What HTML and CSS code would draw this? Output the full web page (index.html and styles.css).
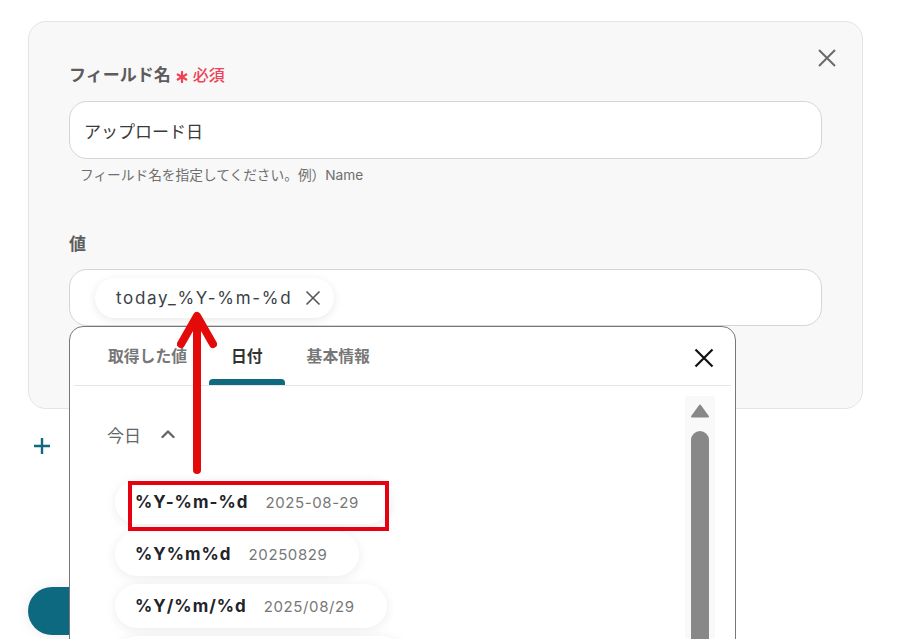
FILE: index.html
```html
<!DOCTYPE html>
<html lang="ja">
<head>
<meta charset="utf-8">
<title>フィールド設定</title>
<link rel="stylesheet" href="styles.css">
</head>
<body>
<div class="page">
  <section class="card">
    <div class="card-head">
      <div class="label">フィールド名<span class="req"><svg class="ast" viewBox="0 0 12 12" width="12" height="12"><g stroke="#ee4256" stroke-width="2.2" stroke-linecap="round"><line x1="6" y1="1" x2="6" y2="11"/><line x1="1.7" y1="3.5" x2="10.3" y2="8.5"/><line x1="1.7" y1="8.5" x2="10.3" y2="3.5"/></g></svg>必須</span></div>
      <button class="card-close" aria-label="閉じる"><svg viewBox="0 0 20 20" width="20" height="20"><path d="M2 2L18 18M18 2L2 18" stroke="#6b6b6b" stroke-width="2" fill="none"/></svg></button>
    </div>
    <div class="field">アップロード日</div>
    <p class="help">フィールド名を指定してください。例）Name</p>
    <div class="label label-value">値</div>
    <div class="value-wrap">
      <div class="field chip-field">
        <span class="chip"><span class="chip-text">today_%Y-%m-%d</span><svg class="chip-x" viewBox="0 0 16 16" width="16" height="16"><path d="M1.5 1.5L14.5 14.5M14.5 1.5L1.5 14.5" stroke="#555" stroke-width="1.6" fill="none"/></svg></span>
      </div>
      <div class="dropdown">
        <div class="tabbar">
          <div class="tabs">
            <span class="tab">取得した値</span>
            <span class="tab active">日付</span>
            <span class="tab">基本情報</span>
          </div>
          <button class="dd-close" aria-label="閉じる"><svg viewBox="0 0 20 20" width="20" height="20"><path d="M1.5 1.5L18.5 18.5M18.5 1.5L1.5 18.5" stroke="#111" stroke-width="2.2" fill="none"/></svg></button>
        </div>
        <div class="dd-body">
          <div class="list">
            <div class="group-head">今日<svg class="chev" viewBox="0 0 14 10" width="14" height="10"><path d="M1.5 8L7 2.5L12.5 8" stroke="#666" stroke-width="2.4" fill="none" stroke-linecap="round" stroke-linejoin="round"/></svg></div>
            <div class="items">
              <div class="item"><b>%Y-%m-%d</b><span>2025-08-29</span></div>
              <div class="item"><b>%Y%m%d</b><span>20250829</span></div>
              <div class="item"><b>%Y/%m/%d</b><span>2025/08/29</span></div>
              <div class="item item-more"></div>
            </div>
          </div>
          <div class="scrollbar">
            <svg class="sb-up" viewBox="0 0 18 14" width="18" height="14"><path d="M9 1.5L17 12.5H1Z" fill="#888" stroke="#888" stroke-width="2" stroke-linejoin="round"/></svg>
            <div class="sb-thumb"></div>
          </div>
        </div>
      </div>
    </div>
  </section>
  <div class="add"><svg viewBox="0 0 18 18" width="18" height="18"><path d="M9 1V17M1 9H17" stroke="#0f6a80" stroke-width="2.4" fill="none"/></svg></div>
  <div class="primary-btn"></div>
</div>
<div class="annot-box"></div>
<svg class="annot-arrow" viewBox="0 0 40 170" width="40" height="170"><g stroke="#e50a0a" stroke-width="8" stroke-linecap="round" stroke-linejoin="round" fill="none"><path d="M20 8V160"/><path d="M4 34L20 6L36 34"/></g></svg>
</body>
</html>
```

FILE: styles.css
```css
* { box-sizing: border-box; }
html, body { margin: 0; padding: 0; background: #fff; }
body {
  width: 897px;
  height: 639px;
  overflow: hidden;
  position: relative;
  font-family: "Inter", "Noto Sans CJK JP", sans-serif;
  color: #333;
}
button { background: none; border: 0; padding: 0; cursor: pointer; display: block; }

.page { padding: 21px 0 0 28px; }

.card {
  width: 835px;
  background: #f8f8f8;
  border: 1px solid #e4e4e4;
  border-radius: 18px;
  padding: 26px 40px 82px 40px;
  position: relative;
  z-index: 1;
}
.card-head { display: flex; justify-content: space-between; align-items: flex-start; }
.card-close { width: 20px; height: 20px; margin-right: -15px; }
.card-close svg { display: block; }

.label {
  font-size: 17px;
  font-weight: 700;
  line-height: 24px;
  color: #5c5c5c;
  padding-top: 15px;
  display: flex;
  align-items: center;
}
.req { display: inline-flex; align-items: center; color: #ee4256; font-size: 16px; font-weight: 500; margin-left: 5px; }
.ast { margin-right: 5px; margin-top: 3px; }

.field {
  height: 58px;
  margin-top: 14px;
  background: #fff;
  border: 1px solid #d3d5db;
  border-radius: 18px;
  padding: 0 14px;
  display: flex;
  align-items: center;
  font-size: 17px;
  color: #3a3a3a;
}
.help {
  margin: 7px 0 0 11px;
  font-size: 13.7px;
  line-height: 18px;
  color: #6e6e6e;
}
.label-value { padding-top: 0; margin-top: 48px; }

.value-wrap { position: relative; margin-top: 13px; }
.chip-field { height: 57px; margin-top: 0; padding-left: 25px; }
.chip {
  display: inline-flex;
  align-items: center;
  height: 40px;
  padding: 0 13px 0 21px;
  background: #fff;
  border-radius: 20px;
  box-shadow: 0 2px 10px rgba(0,0,0,0.09);
}
.chip-text { font-size: 17px; letter-spacing: 0.1em; color: #3b3f46; }
.chip-x { margin-left: 13px; display: block; }

.dropdown {
  position: absolute;
  top: 100%;
  left: 0;
  width: 667px;
  height: 340px;
  background: #fff;
  border: 1px solid #777;
  border-radius: 14px 14px 0 0;
  z-index: 3;
}
.tabbar {
  display: flex;
  justify-content: space-between;
  align-items: center;
  margin: 0 4px;
  border-bottom: 1px solid #e6e6e6;
}
.tabs { display: flex; padding-left: 12px; }
.tab {
  position: relative;
  height: 58px;
  padding: 18px 22px 0;
  font-size: 15.8px;
  font-weight: 700;
  line-height: 24px;
  color: #777;
}
.tab.active { color: #333; }
.tab.active::after {
  content: "";
  position: absolute;
  left: 0; right: 0; bottom: 0;
  height: 6px;
  background: #0f6a80;
  border-radius: 4px 4px 0 0;
}
.dd-close { width: 20px; height: 20px; margin-right: 17px; margin-top: 4px; }
.dd-close svg { display: block; }

.dd-body { display: flex; justify-content: space-between; }
.list { padding: 38px 0 0 37px; }
.group-head {
  display: flex;
  align-items: center;
  font-size: 17px;
  line-height: 24px;
  color: #666;
}
.chev { margin-left: 20px; margin-top: -4px; }
.items { display: flex; flex-direction: column; align-items: flex-start; gap: 8px; margin: 32px 0 0 8px; }
.item {
  height: 44px;
  display: flex;
  align-items: center;
  gap: 17px;
  padding: 0 32px 0 20px;
  background: #fff;
  border-radius: 22px;
  box-shadow: 0 2px 12px rgba(0,0,0,0.08);
}
.item-more { width: 290px; }
.item b { font-size: 17px; font-weight: 700; letter-spacing: 0.06em; color: #1f232a; }
.item span { font-size: 15px; letter-spacing: 0.04em; color: #777; }

.scrollbar {
  width: 30px;
  height: 260px;
  margin: 10px 20px 0 0;
  background: #f9f9f9;
  display: flex;
  flex-direction: column;
  align-items: center;
}
.sb-up { display: block; margin-top: 8px; }
.sb-thumb { width: 18px; height: 220px; margin-top: 13px; background: #888; border-radius: 9px; }

.add { margin: 28px 0 0 5px; width: 18px; height: 18px; }
.add svg { display: block; }
.primary-btn {
  margin-top: 132px;
  width: 220px;
  height: 48px;
  background: #0d6980;
  border-radius: 24px;
  box-shadow: 0 0 14px rgba(0,0,0,0.08);
}

.annot-box {
  position: absolute;
  left: 128px;
  top: 481px;
  width: 261px;
  height: 50px;
  border: 4px solid #e50012;
  z-index: 5;
}
.annot-arrow {
  position: absolute;
  left: 177px;
  top: 310px;
  z-index: 6;
}
```
